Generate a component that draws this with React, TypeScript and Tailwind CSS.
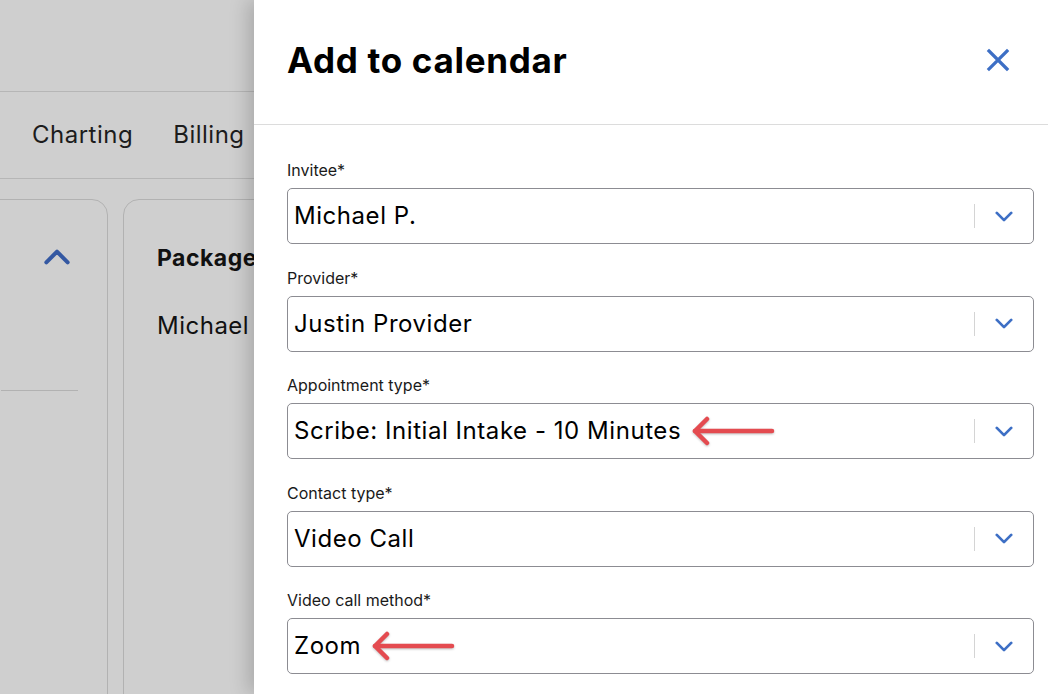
import React from 'react';

const FIELDS = [
  { label: 'Invitee*', value: 'Michael P.', arrow: false },
  { label: 'Provider*', value: 'Justin Provider', arrow: false },
  { label: 'Appointment type*', value: 'Scribe: Initial Intake - 10 Minutes', arrow: true },
  { label: 'Contact type*', value: 'Video Call', arrow: false },
  { label: 'Video call method*', value: 'Zoom', arrow: true },
];

const Chevron = ({ up = false, className = '' }: { up?: boolean; className?: string }) => (
  <svg viewBox="0 0 20 12" className={className} fill="none" stroke="currentColor" strokeWidth="3" strokeLinecap="round" strokeLinejoin="round">
    {up ? <path d="M2 10 L10 2 L18 10" /> : <path d="M2 2 L10 10 L18 2" />}
  </svg>
);

const RedArrow = () => (
  <svg width="84" height="32" viewBox="0 0 84 32" className="ml-[11px] shrink-0 drop-shadow-[0_1px_1px_rgba(0,0,0,0.25)]" fill="none" stroke="#e44b50" strokeWidth="4.5" strokeLinecap="round" strokeLinejoin="round">
    <path d="M3 16 H80" />
    <path d="M15 4 L3 16 L15 28" />
  </svg>
);

const SelectField = ({ label, value, arrow }: { label: string; value: string; arrow: boolean }) => (
  <div>
    <div className="text-[16px] leading-[24px] text-[#1a1a1a]">{label}</div>
    <div className="mt-[6px] h-[56px] flex items-center border border-[#8c8c92] rounded-[5px] bg-white">
      <div className="flex-1 flex items-center pl-[6px] text-[24px] tracking-[0.55px] text-black">
        <span>{value}</span>
        {arrow && <RedArrow />}
      </div>
      <div className="w-px h-[24px] bg-[#d4d4d4]" />
      <div className="w-[58px] flex justify-center text-[#3d6fc5]">
        <Chevron className="w-[18px] h-[11px]" />
      </div>
    </div>
  </div>
);

export default function App() {
  return (
    <div className="relative w-[1048px] h-[694px] overflow-hidden bg-[#cfcfcf] font-['Inter',sans-serif]">
      {/* dimmed page behind */}
      <div className="h-[92px] border-b border-[#b6b6b6]" />
      <div className="h-[87px] border-b border-[#b6b6b6] flex items-center gap-[40px] pl-[32px] text-[24px] tracking-[0.5px] text-[#1c1c1c]">
        <span>Charting</span>
        <span>Billing</span>
      </div>
      <div className="flex gap-[15px] pt-[20px]">
        <div className="-ml-[20px] w-[128px] h-[520px] border border-[#b2b2b2] rounded-tr-[16px]">
          <div className="flex justify-end pr-[36px] pt-[49px] text-[#3458a2]">
            <Chevron up className="w-[28px] h-[16px]" />
          </div>
          <div className="mt-[125px] ml-[20px] w-[77px] h-px bg-[#b2b2b2]" />
        </div>
        <div className="flex-1 h-[520px] border border-[#b2b2b2] rounded-tl-[16px] pl-[33px] pt-[43px] text-[#111] tracking-[0.5px]">
          <div className="text-[23px] font-bold leading-[30px]">Package</div>
          <div className="mt-[38px] text-[24px] leading-[30px]">Michael</div>
        </div>
      </div>

      {/* drawer */}
      <div className="absolute top-0 right-0 w-[794px] h-full bg-white shadow-[-6px_0_18px_rgba(0,0,0,0.18)]">
        <div className="h-[125px] border-b border-[#dcdcdc] flex items-center justify-between pl-[33px] pr-[38px] pb-[4px]">
          <h1 className="text-[35px] font-bold tracking-[0.7px] text-black">Add to calendar</h1>
          <svg width="24" height="24" viewBox="0 0 24 24" fill="none" stroke="#3d6fc5" strokeWidth="3.2" strokeLinecap="square">
            <path d="M3 3 L21 21 M21 3 L3 21" />
          </svg>
        </div>
        <div className="pl-[33px] pr-[14px] pt-[33px] flex flex-col gap-[21.5px]">
          {FIELDS.map(f => (
            <SelectField key={f.label} {...f} />
          ))}
        </div>
      </div>
    </div>
  );
}
